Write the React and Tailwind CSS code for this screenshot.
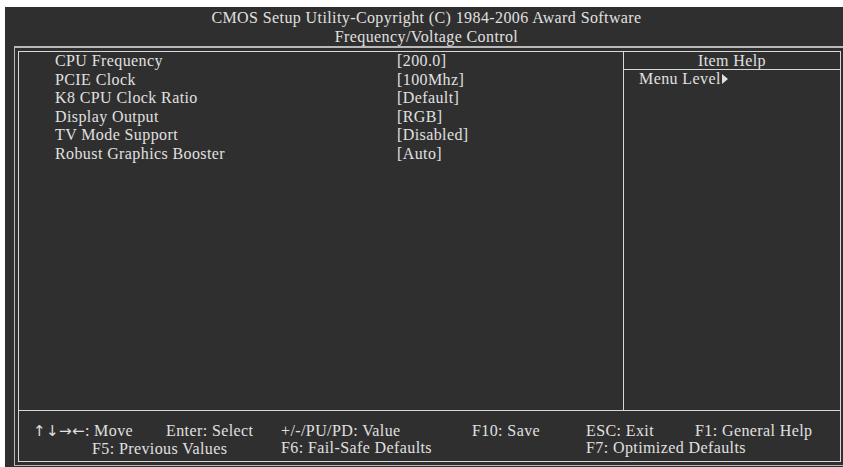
// App.jsx - Award BIOS "Frequency/Voltage Control" screen
const items = [
  ['CPU Frequency', '[200.0]'],
  ['PCIE Clock', '[100Mhz]'],
  ['K8 CPU Clock Ratio', '[Default]'],
  ['Display Output', '[RGB]'],
  ['TV Mode Support', '[Disabled]'],
  ['Robust Graphics Booster', '[Auto]'],
];

function Arrow() {
  return (
    <svg width="6" height="10" viewBox="0 0 6 10" className="inline-block ml-[1px] mb-[2px]">
      <path d="M0 0 L6 5 L0 10 Z" fill="#e0e0e0" />
    </svg>
  );
}

function App() {
  return (
    <div
      className="w-[843px] h-[467px] bg-white overflow-hidden text-[#e0e0e0] text-[16px] tracking-[0.4px]"
      style={{ fontFamily: '"Liberation Serif", "Times New Roman", serif' }}
    >
      <div className="ml-[5px] mt-[7px] w-[838px] h-[460px] bg-[#2f2f2f] overflow-hidden">
        {/* title */}
        <div className="h-[39px] pt-[1px] leading-[19px] text-center pl-[5px]">
          <div>CMOS Setup Utility-Copyright (C) 1984-2006 Award Software</div>
          <div>Frequency/Voltage Control</div>
        </div>

        {/* outer frame, right edge runs past the screenshot */}
        <div className="ml-[9px] w-[840px] h-[420px] border-t-2 border-l border-b border-[#b8b8b8] pt-[3px] pl-[3px] pb-[3px]">
          <div className="w-[823px] h-[411px] border border-[#d8d8d8] flex flex-col">
            <div className="flex h-[359px] border-b border-[#d8d8d8]">
              {/* settings list */}
              <div className="w-[605px] border-r border-[#d8d8d8] pl-[36px] leading-[18.5px]">
                {items.map(([label, value]) => (
                  <div key={label} className="flex">
                    <span className="w-[342px]">{label}</span>
                    <span>{value}</span>
                  </div>
                ))}
              </div>

              {/* item help */}
              <div className="flex-1 flex flex-col">
                <div className="h-[18px] border-b border-[#d8d8d8] text-center leading-[17px]">Item Help</div>
                <div className="pl-[15px] pt-[1px] leading-[16px]">
                  Menu Level<Arrow />
                </div>
              </div>
            </div>

            {/* key legend */}
            <div className="flex-1 pt-[11px] leading-[17px]">
              <div className="flex">
                <div className="w-[262px] pl-[14px]">
                  <div className="flex">
                    <span className="w-[133px]">
                      <span className="text-[15px] tracking-[0.4px]" style={{ fontFamily: '"DejaVu Sans", sans-serif' }}>↑↓→←</span>: Move
                    </span>
                    <span>Enter: Select</span>
                  </div>
                  <div className="pl-[59px]">F5: Previous Values</div>
                </div>
                <div className="w-[305px]">
                  <div className="flex">
                    <span className="w-[191px]">+/-/PU/PD: Value</span>
                    <span>F10: Save</span>
                  </div>
                  <div>F6: Fail-Safe Defaults</div>
                </div>
                <div>
                  <div className="flex">
                    <span className="w-[109px]">ESC: Exit</span>
                    <span>F1: General Help</span>
                  </div>
                  <div>F7: Optimized Defaults</div>
                </div>
              </div>
            </div>
          </div>
        </div>
      </div>
    </div>
  );
}

export default App;
